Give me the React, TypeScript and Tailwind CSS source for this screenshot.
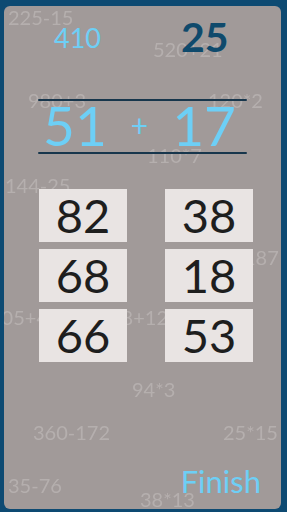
const ghosts = [
  { text: "225-15", cls: "left-[4px] top-[1px]" },
  { text: "520+21", cls: "left-[149px] top-[33px]" },
  { text: "980+3", cls: "left-[24px] top-[84px]" },
  { text: "120*2", cls: "left-[204px] top-[84px]" },
  { text: "110*7", cls: "left-[143px] top-[139px]" },
  { text: "144-25", cls: "left-[1px] top-[169px]" },
  { text: "187", cls: "left-[240px] top-[241px]" },
  { text: "105+4", cls: "left-[-14px] top-[301px]" },
  { text: "48+12", cls: "left-[106px] top-[301px]" },
  { text: "94*3", cls: "left-[128px] top-[373px]" },
  { text: "360-172", cls: "left-[29px] top-[416px]" },
  { text: "25*15", cls: "left-[219px] top-[416px]" },
  { text: "35-76", cls: "left-[4px] top-[469px]" },
  { text: "38*13", cls: "left-[136px] top-[483px]" },
];

const answers = ["82", "38", "68", "18", "66", "53"];

export default function App() {
  return (
    <div
      className="w-[287px] h-[512px] bg-[#0d4a72] pt-[6px] pl-[4px] pr-[6px] pb-[3px]"
      style={{ fontFamily: "Lato, 'Open Sans', sans-serif" }}
    >
      <div className="relative h-full rounded-[6px] bg-[#a19a99] overflow-hidden flex flex-col">
        {/* faint background sums */}
        {ghosts.map((g) => (
          <span
            key={g.text}
            className={`absolute ${g.cls} text-[20px] leading-none text-[#b5afae] blur-[0.5px] select-none`}
          >
            {g.text}
          </span>
        ))}

        {/* scores */}
        <div className="relative z-10 flex items-start">
          <span className="ml-[50px] mt-[18px] text-[27px] leading-none text-[#6dcff6]">410</span>
          <span className="ml-[80px] mt-[10px] text-[41px] leading-none font-bold text-[#0f4a6c]">25</span>
        </div>

        {/* equation */}
        <div className="relative z-10 mt-[42px] mx-[34px] flex flex-col">
          <div className="h-[2px] rounded-full bg-[#17364c]" />
          <div className="flex items-start justify-center text-[55px] leading-none text-[#6dcff6] -mt-[3px]">
            <span className="-ml-[6px]">51</span>
            <span className="mx-[24px] mt-[12px] text-[30px]">+</span>
            <span>17</span>
          </div>
          <div className="-mt-[1px] h-[2px] rounded-full bg-[#17364c]" />
        </div>

        {/* answers */}
        <div className="relative z-10 mt-[35px] ml-[35px] grid grid-cols-[88px_88px] gap-x-[38px] gap-y-[7px]">
          {answers.map((a) => (
            <div
              key={a}
              className="h-[53px] bg-[#e9e4e3] flex items-center justify-center text-[47px] leading-none text-[#1e1e1e]"
            >
              {a}
            </div>
          ))}
        </div>

        <div className="flex-1" />

        <div className="relative z-10 flex justify-end pr-[20px] pb-[12px]">
          <span className="text-[31px] leading-none text-[#6dcff6]">Finish</span>
        </div>
      </div>
    </div>
  );
}
